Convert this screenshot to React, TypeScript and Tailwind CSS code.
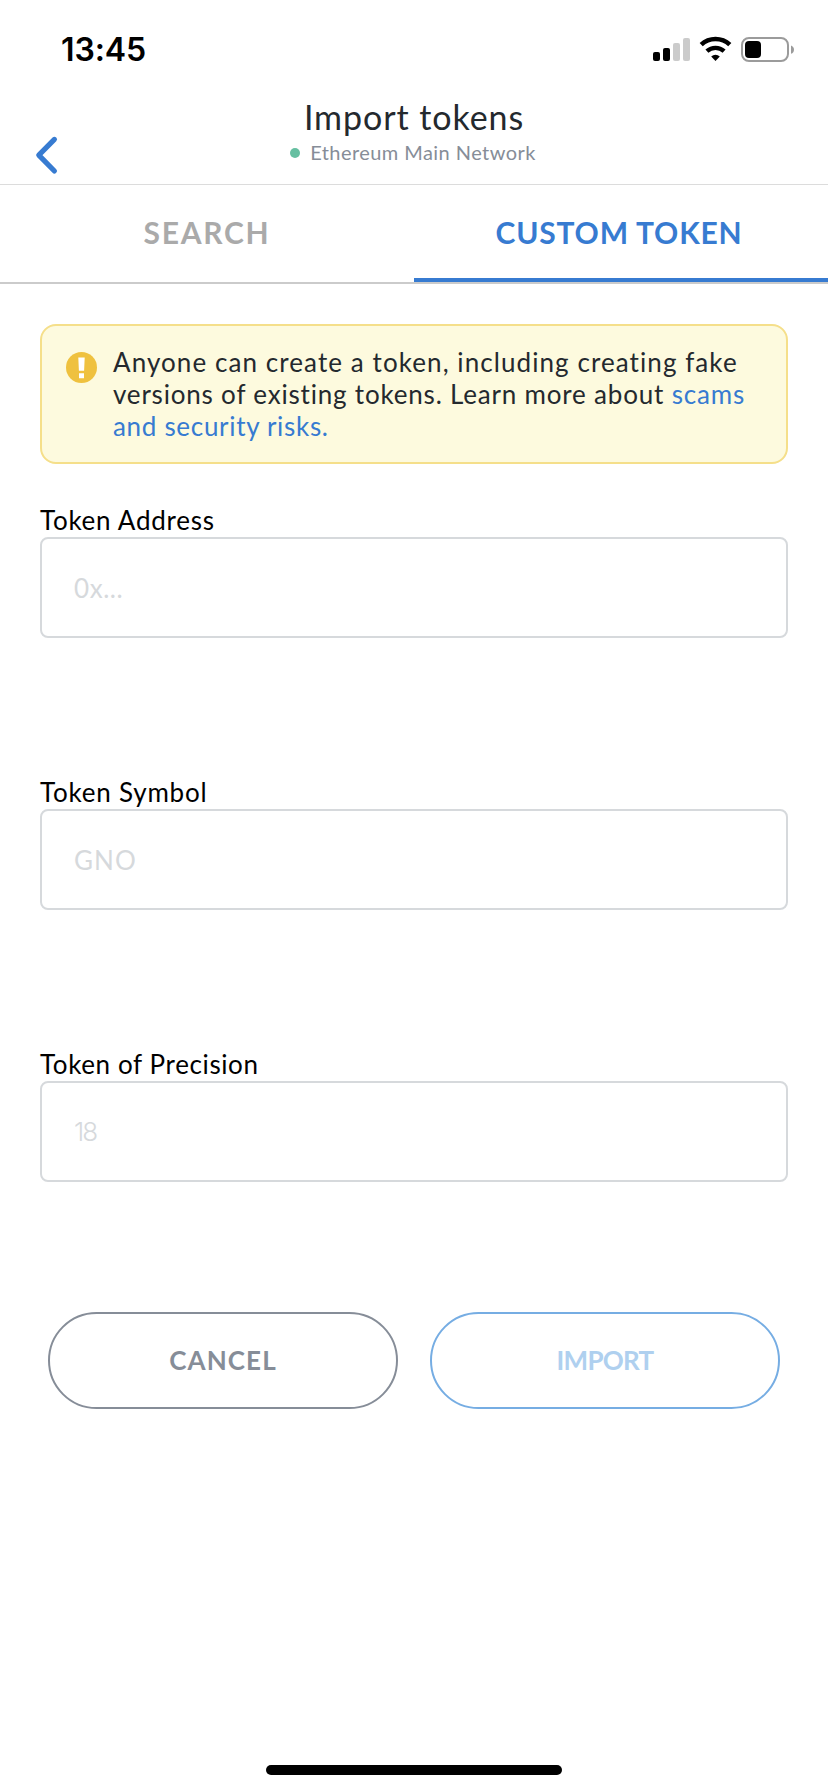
function StatusBar() {
  return (
    <div className="flex h-[88px] justify-between pl-[61px] pr-[34px]">
      <span className="pt-[30px] font-['Inter',sans-serif] text-[32px] font-semibold leading-[39px] tracking-[-0.1px] text-black">
        13:45
      </span>
      <svg className="mt-9 h-[27px] w-[142px]" viewBox="652 36 142 27" fill="none" aria-hidden="true">
        <rect x="653" y="52" width="7" height="9" rx="2" fill="#000" />
        <rect x="663" y="48" width="7" height="13" rx="2" fill="#000" />
        <rect x="673" y="43" width="7" height="18" rx="2" fill="#cbcbcb" />
        <rect x="683" y="38" width="7" height="23" rx="2" fill="#cbcbcb" />
        <path d="M701.2 44.6a21 21 0 0 1 28.6 0" stroke="#000" strokeWidth="4.6" />
        <path d="M706.9 51.2a12.8 12.8 0 0 1 17.2 0" stroke="#000" strokeWidth="4.4" />
        <path d="M711.2 56.6a6.2 6.2 0 0 1 8.6 0L715.5 61Z" fill="#000" />
        <rect x="742" y="38" width="46" height="23" rx="7" stroke="#9b9b9b" strokeWidth="2" />
        <rect x="745" y="41" width="16" height="17" rx="4" fill="#000" />
        <path d="M791 45.6q3 1.2 3 4.1t-3 4.1Z" fill="#9b9b9b" />
      </svg>
    </div>
  );
}

function Header() {
  return (
    <header className="grid h-[97px] grid-cols-[100px_1fr_100px] border-b border-[#dcdcdc]">
      <button className="pl-[34px] pt-[37px]" aria-label="Back">
        <svg className="h-10 w-[26px]" viewBox="34 125 26 40" fill="none">
          <path
            d="M54.4 129.4 38.8 145.1 54.4 161"
            stroke="#377bd1"
            strokeWidth="5.2"
            strokeLinecap="round"
            strokeLinejoin="round"
          />
        </svg>
      </button>
      <div className="flex flex-col items-center pt-2">
        <h1 className="whitespace-nowrap text-[34px] leading-[42px] tracking-[0.92px] text-[#24292e]">
          Import tokens
        </h1>
        <div className="flex items-center gap-2.5 whitespace-nowrap pr-0.5">
          <span className="mt-0.5 size-2.5 rounded-full bg-[#66bfa1]" />
          <span className="text-[20px] leading-7 tracking-[0.44px] text-[#868d98]">
            Ethereum Main Network
          </span>
        </div>
      </div>
    </header>
  );
}

function Tabs() {
  return (
    <nav className="grid h-[99px] grid-cols-2 border-b-2 border-[#cbcbcb] text-[30px] font-bold leading-9">
      <button className="border-b-4 border-transparent tracking-[1.72px] text-[#aaaaaa]">
        SEARCH
      </button>
      <button className="border-b-4 border-[#377bd1] pr-1 tracking-[0.81px] text-[#377bd1]">
        CUSTOM TOKEN
      </button>
    </nav>
  );
}

function Warning() {
  return (
    <div className="mt-10 flex h-[140px] rounded-2xl border-2 border-[#f5df8a] bg-[#fdfade] pl-6 pt-5">
      <svg className="mt-1.5 size-[31px] shrink-0" viewBox="0 0 31 31" aria-hidden="true">
        <circle cx="15.5" cy="15.5" r="15.5" fill="#efc13f" />
        <path d="M12.3 5.5h6.4l-.6 13.3h-5.2zM13 21.3h5v5h-5z" fill="#fff" />
      </svg>
      <p className="ml-4 flex flex-col whitespace-nowrap text-[26px] leading-8 text-[#24292e]">
        <span className="tracking-[1.08px]">Anyone can create a token, including creating fake</span>
        <span className="tracking-[0.81px]">
          versions of existing tokens. Learn more about <a className="text-[#377bd1]">scams</a>
        </span>
        <a className="tracking-[0.69px] text-[#377bd1]">and security risks.</a>
      </p>
    </div>
  );
}

interface FieldProps {
  label: string;
  placeholder: string;
  labelClass: string;
  inputClass: string;
}

function Field({ label, placeholder, labelClass, inputClass }: FieldProps) {
  return (
    <label className="flex flex-col">
      <span className={`h-[33px] text-[26px] leading-8 text-black ${labelClass}`}>{label}</span>
      <input
        placeholder={placeholder}
        className={`h-[101px] w-full rounded-lg border-2 border-[#d6d9dc] bg-white placeholder:text-[#d6d9dc] ${inputClass}`}
      />
    </label>
  );
}

export default function App() {
  return (
    <div className="flex h-[1792px] w-[828px] flex-col bg-white font-['Lato',sans-serif]">
      <StatusBar />
      <Header />
      <Tabs />
      <main className="flex flex-1 flex-col px-10">
        <Warning />
        <div className="mt-10 flex flex-col gap-[138px]">
          <Field
            label="Token Address"
            placeholder="0x..."
            labelClass="tracking-[0.74px]"
            inputClass="pl-8 text-[26px] tracking-[0.55px]"
          />
          <Field
            label="Token Symbol"
            placeholder="GNO"
            labelClass="tracking-[0.79px]"
            inputClass="pl-8 text-[26px] tracking-[1.08px]"
          />
          <Field
            label="Token of Precision"
            placeholder="18"
            labelClass="tracking-[0.62px]"
            inputClass="pl-8 font-['Inter',sans-serif] text-[26px] font-light tracking-[-2px]"
          />
        </div>
        <div className="mt-[130px] grid grid-cols-2 gap-8 px-2 text-[26px] font-bold">
          <button className="h-[97px] rounded-full border-2 border-[#868d98] tracking-[1.11px] text-[#868d98]">
            CANCEL
          </button>
          <button className="h-[97px] rounded-full border-2 border-[#76ade3] tracking-[-0.72px] text-[#afd0ef]">
            IMPORT
          </button>
        </div>
      </main>
      <div className="mb-[17px] h-2.5 w-[296px] self-center rounded-full bg-black" />
    </div>
  );
}
